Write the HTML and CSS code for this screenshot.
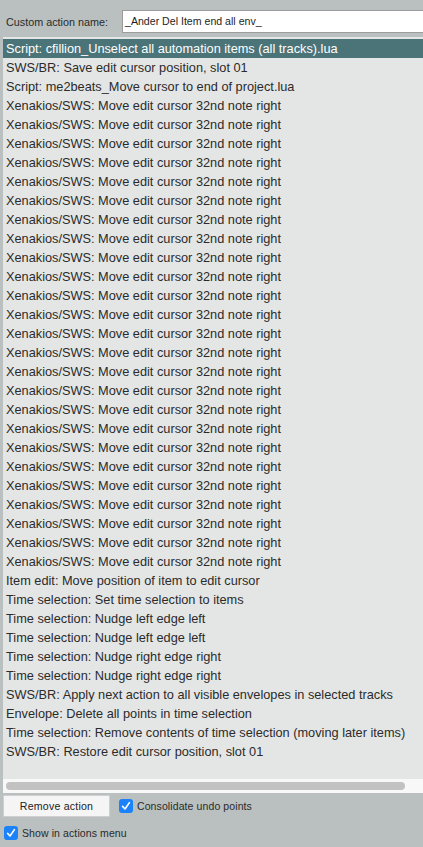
FILE: index.html
```html
<!DOCTYPE html>
<html>
<head>
<meta charset="utf-8">
<link rel="stylesheet" href="styles.css">
</head>
<body>
<div class="app">
  <div class="name-row">
    <label class="name-label">Custom action name:</label>
    <div class="name-input">_Ander Del Item end all env_</div>
  </div>
  <div class="list">
    <div class="rows">
      <div class="row selected">Script: cfillion_Unselect all automation items (all tracks).lua</div>
      <div class="row">SWS/BR: Save edit cursor position, slot 01</div>
      <div class="row">Script: me2beats_Move cursor to end of project.lua</div>
      <div class="row">Xenakios/SWS: Move edit cursor 32nd note right</div>
      <div class="row">Xenakios/SWS: Move edit cursor 32nd note right</div>
      <div class="row">Xenakios/SWS: Move edit cursor 32nd note right</div>
      <div class="row">Xenakios/SWS: Move edit cursor 32nd note right</div>
      <div class="row">Xenakios/SWS: Move edit cursor 32nd note right</div>
      <div class="row">Xenakios/SWS: Move edit cursor 32nd note right</div>
      <div class="row">Xenakios/SWS: Move edit cursor 32nd note right</div>
      <div class="row">Xenakios/SWS: Move edit cursor 32nd note right</div>
      <div class="row">Xenakios/SWS: Move edit cursor 32nd note right</div>
      <div class="row">Xenakios/SWS: Move edit cursor 32nd note right</div>
      <div class="row">Xenakios/SWS: Move edit cursor 32nd note right</div>
      <div class="row">Xenakios/SWS: Move edit cursor 32nd note right</div>
      <div class="row">Xenakios/SWS: Move edit cursor 32nd note right</div>
      <div class="row">Xenakios/SWS: Move edit cursor 32nd note right</div>
      <div class="row">Xenakios/SWS: Move edit cursor 32nd note right</div>
      <div class="row">Xenakios/SWS: Move edit cursor 32nd note right</div>
      <div class="row">Xenakios/SWS: Move edit cursor 32nd note right</div>
      <div class="row">Xenakios/SWS: Move edit cursor 32nd note right</div>
      <div class="row">Xenakios/SWS: Move edit cursor 32nd note right</div>
      <div class="row">Xenakios/SWS: Move edit cursor 32nd note right</div>
      <div class="row">Xenakios/SWS: Move edit cursor 32nd note right</div>
      <div class="row">Xenakios/SWS: Move edit cursor 32nd note right</div>
      <div class="row">Xenakios/SWS: Move edit cursor 32nd note right</div>
      <div class="row">Xenakios/SWS: Move edit cursor 32nd note right</div>
      <div class="row">Xenakios/SWS: Move edit cursor 32nd note right</div>
      <div class="row">Item edit: Move position of item to edit cursor</div>
      <div class="row">Time selection: Set time selection to items</div>
      <div class="row">Time selection: Nudge left edge left</div>
      <div class="row">Time selection: Nudge left edge left</div>
      <div class="row">Time selection: Nudge right edge right</div>
      <div class="row">Time selection: Nudge right edge right</div>
      <div class="row">SWS/BR: Apply next action to all visible envelopes in selected tracks</div>
      <div class="row">Envelope: Delete all points in time selection</div>
      <div class="row">Time selection: Remove contents of time selection (moving later items)</div>
      <div class="row">SWS/BR: Restore edit cursor position, slot 01</div>
    </div>
    <div class="hscroll"><div class="thumb"></div></div>
  </div>
  <div class="controls">
    <div class="control-row">
      <button class="btn">Remove action</button>
      <label class="check"><span class="box"><svg viewBox="0 0 14 14" width="14" height="14"><path d="M3.6 7.4 L6 10 L10.4 3.6" fill="none" stroke="#fff" stroke-width="1.6" stroke-linecap="round" stroke-linejoin="round"/></svg></span>Consolidate undo points</label>
    </div>
    <div class="control-row second">
      <label class="check"><span class="box"><svg viewBox="0 0 14 14" width="14" height="14"><path d="M3.6 7.4 L6 10 L10.4 3.6" fill="none" stroke="#fff" stroke-width="1.6" stroke-linecap="round" stroke-linejoin="round"/></svg></span>Show in actions menu</label>
    </div>
  </div>
</div>
</body>
</html>
```
FILE: styles.css
```css
* { box-sizing: border-box; }
html, body { margin: 0; padding: 0; }
body {
  background: #b9c0bf;
  font-family: "Liberation Sans", Arial, sans-serif;
  color: #2a2a2a;
  width: 423px;
  height: 847px;
  overflow: hidden;
}
.app { display: flex; flex-direction: column; }
.name-row {
  display: flex;
  align-items: center;
  height: 37px;
  padding: 10px 0 4px 6px;
}
.name-label {
  font-size: 10.8px;
  width: 116px;
  flex: none;
  color: #2a2a2a;
}
.name-input {
  flex: none;
  width: 310px;
  height: 23px;
  background: #fff;
  border: 1px solid #9c9c9c;
  font-size: 10.6px;
  padding: 0 0 0 2px;
  line-height: 21px;
  color: #1e1e1e;
}
.list {
  margin-left: 3px;
  background: #e4e6e5;
  padding-top: 2px;
  height: 756px;
  display: flex;
  flex-direction: column;
}
.rows { flex: 1; }
.row {
  height: 19px;
  line-height: 19px;
  font-size: 12.75px;
  padding-left: 3px;
  white-space: nowrap;
  color: #2b2b2b;
}
.row.selected {
  background: #4b7479;
  color: #fff;
}
.hscroll {
  height: 14px;
  background: #f8f8f8;
  padding: 3px 0 0 3px;
}
.thumb {
  width: 399px;
  height: 8px;
  border-radius: 4px;
  background: #c2c2c2;
}
.controls {
  display: flex;
  flex-direction: column;
}
.control-row {
  display: flex;
  align-items: center;
  padding-left: 3px;
  margin-top: 2px;
  height: 22px;
  gap: 9px;
}
.control-row.second {
  margin-top: 5px;
  padding-left: 4px;
}
.btn {
  width: 107px;
  height: 22px;
  background: #f5f5f5;
  border: 1px solid #cfcfcf;
  border-radius: 0;
  font-family: "Liberation Sans", Arial, sans-serif;
  font-size: 10.6px;
  color: #222;
  padding: 0;
  letter-spacing: 0.2px;
}
.check {
  display: flex;
  align-items: center;
  gap: 4px;
  font-size: 10.5px;
  color: #2a2a2a;
  letter-spacing: 0.1px;
}
.box {
  width: 14px;
  height: 14px;
  border-radius: 3px;
  background: #1b82fa;
  display: block;
}
.box svg { display: block; }
```
